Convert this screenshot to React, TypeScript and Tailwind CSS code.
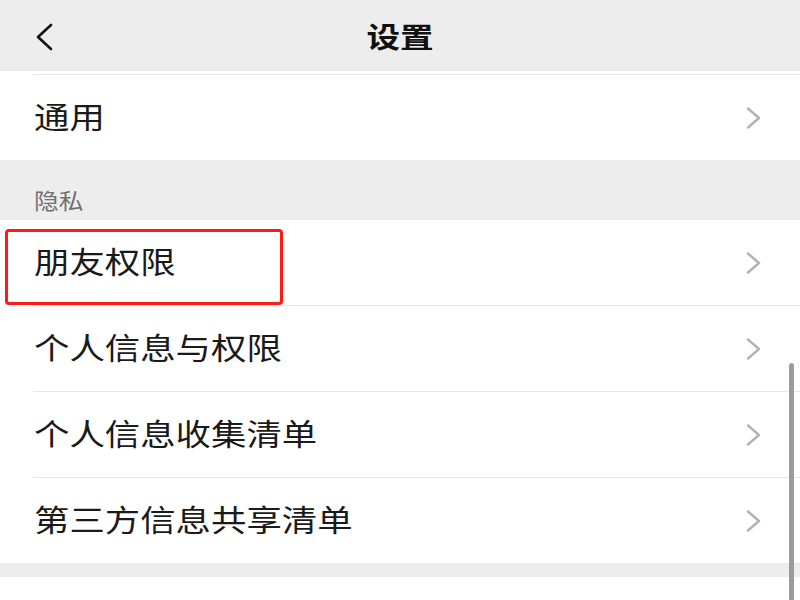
import React from 'react';

const FONT = '"Noto Sans CJK SC", "Noto Sans", sans-serif';

function Chevron() {
  return (
    <svg width="18" height="24" viewBox="0 0 18 24" className="shrink-0">
      <path d="M3 2.5 L14 12 L3 21.5" fill="none" stroke="#b2b2b2" strokeWidth="2.4" strokeLinecap="round" strokeLinejoin="round" />
    </svg>
  );
}

function Row({ label }: { label: string }) {
  return (
    <div className="flex h-[85px] items-center justify-between pl-[34px] pr-[37px] bg-white">
      <span className="mb-[6px] inline-block origin-left scale-x-[1.18] text-[30px] leading-none text-[#1a1a1a]">{label}</span>
      <Chevron />
    </div>
  );
}

function Divider() {
  return <div className="ml-[33px] h-px bg-[#e6e6e6]" />;
}

export default function App() {
  return (
    <div className="relative h-[600px] w-[800px] overflow-hidden bg-white" style={{ fontFamily: FONT }}>
      {/* header */}
      <div className="relative flex h-[71px] items-center justify-center bg-[#ededed]">
        <svg width="24" height="30" viewBox="0 0 24 30" className="absolute left-[32px] top-[22px]">
          <path d="M19 3 L6 15 L19 27" fill="none" stroke="#111" strokeWidth="2.6" strokeLinecap="round" strokeLinejoin="round" />
        </svg>
        <span className="inline-block scale-x-[1.2] text-[28px] font-bold leading-none text-[#111]">设置</span>
      </div>

      <div className="h-[3px] bg-white" />
      <Divider />
      <Row label="通用" />

      <div className="flex h-[60px] items-end bg-[#ededed] pb-[10px] pl-[34px]">
        <span className="inline-block origin-left scale-x-[1.12] text-[22px] leading-none text-[#707070]">隐私</span>
      </div>

      <Row label="朋友权限" />
      <Divider />
      <Row label="个人信息与权限" />
      <Divider />
      <Row label="个人信息收集清单" />
      <Divider />
      <Row label="第三方信息共享清单" />

      <div className="h-[14px] bg-[#ededed]" />
      <div className="h-[40px] bg-white" />

      {/* annotation box */}
      <div className="absolute left-[5px] top-[229px] h-[76px] w-[278px] rounded-[4px] border-[3px] border-[#ff1a1a]" />

      {/* scrollbar */}
      <div className="absolute left-[789px] top-[363px] h-[260px] w-[5px] rounded-full bg-[#9b9b9b]" />
    </div>
  );
}
